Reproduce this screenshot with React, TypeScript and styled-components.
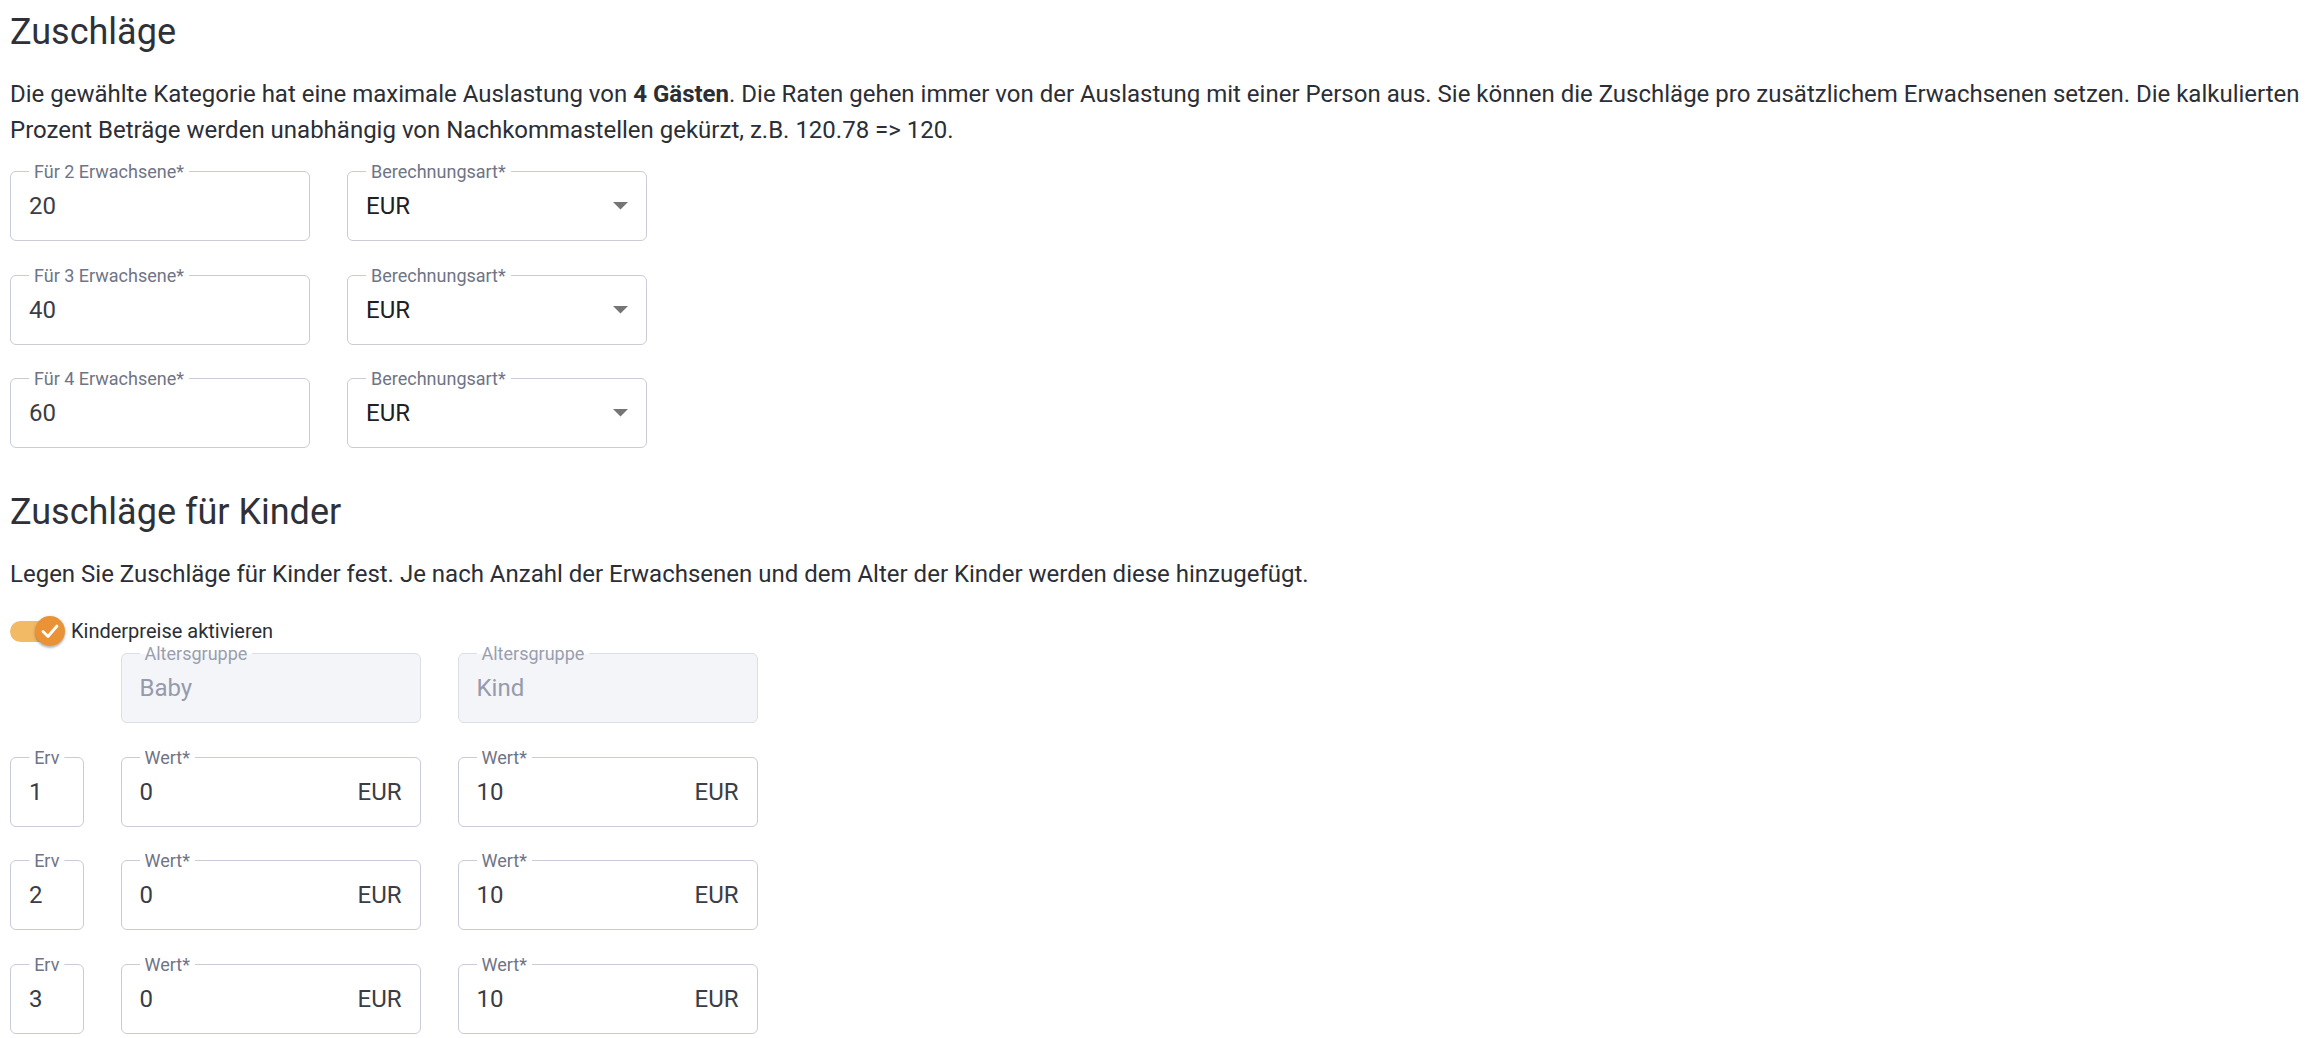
import React from 'react';
import styled, { createGlobalStyle } from 'styled-components';

const GlobalStyle = createGlobalStyle`
  body {
    margin: 0;
    background: #ffffff;
    font-family: Roboto, "Liberation Sans", Arial, sans-serif;
  }
`;

const Page = styled.div`
  padding: 8px 8px 0 10px;
`;

const Title = styled.h2<{ $spaced?: boolean }>`
  margin: ${p => (p.$spaced ? '40px' : '0')} 0 20px;
  font-size: 36px;
  font-weight: 400;
  line-height: 48px;
  color: #2e3138;
`;

const Text = styled.p`
  margin: 0;
  font-size: 24px;
  line-height: 36px;
  color: #2b2e35;

  b {
    font-weight: 700;
  }
`;

const FieldGrid = styled.div<{ $cols: string; $top: number }>`
  display: grid;
  grid-template-columns: ${p => p.$cols};
  column-gap: 37px;
  row-gap: 33.5px;
  margin-top: ${p => p.$top}px;
`;

const FieldBox = styled.div<{ $disabled?: boolean }>`
  position: relative;
  box-sizing: border-box;
  height: 70px;
  display: flex;
  align-items: center;
  padding: 0 18px 0 18px;
  border: 1px solid ${p => (p.$disabled ? '#dcdee6' : '#c9cbd7')};
  border-radius: 6px;
  background: ${p => (p.$disabled ? '#f4f5f9' : '#ffffff')};
`;

const FieldLabel = styled.span<{ $disabled?: boolean; $centered?: boolean }>`
  position: absolute;
  top: -10px;
  left: ${p => (p.$centered ? '50%' : '18px')};
  transform: ${p => (p.$centered ? 'translateX(-50%)' : 'none')};
  padding: 0 5px;
  font-size: 18px;
  line-height: 20px;
  white-space: nowrap;
  color: ${p => (p.$disabled ? '#9a9eaf' : '#6f7486')};
  background: ${p =>
    p.$disabled
      ? 'linear-gradient(to bottom, #ffffff 50%, #f4f5f9 50%)'
      : '#ffffff'};
`;

const FieldValue = styled.span<{ $disabled?: boolean; $strong?: boolean }>`
  flex: 1;
  font-size: 24px;
  line-height: 30px;
  color: ${p => (p.$disabled ? '#969aab' : p.$strong ? '#1f2024' : '#3a3d45')};
`;

const Adornment = styled.span`
  font-size: 24px;
  line-height: 30px;
  color: #3a3d45;
`;

const ArrowIcon = styled.svg`
  width: 15px;
  height: 8px;
  fill: #757575;
`;

const Spacer = styled.div``;

const SwitchRow = styled.label`
  display: flex;
  align-items: center;
  height: 40px;
  margin-top: 19px;
  gap: 5px;
`;

const SwitchWrap = styled.span`
  position: relative;
  width: 56px;
  height: 40px;
  flex-shrink: 0;
`;

const SwitchTrack = styled.span`
  position: absolute;
  left: 0;
  top: 9.5px;
  width: 51px;
  height: 21px;
  border-radius: 11px;
  background: #f3ba66;
`;

const SwitchThumb = styled.span`
  position: absolute;
  left: 25px;
  top: 5px;
  width: 30px;
  height: 30px;
  border-radius: 50%;
  background: #ea9336;
  box-shadow: 0 2px 2px rgba(0, 0, 0, 0.22), 0 1px 4px rgba(0, 0, 0, 0.12);
  display: flex;
  align-items: center;
  justify-content: center;
`;

const SwitchLabel = styled.span`
  font-size: 20px;
  line-height: 28px;
  color: #2b2e35;
`;

type FieldProps = {
  label: string;
  value: string;
  suffix?: string;
  select?: boolean;
  disabled?: boolean;
  centered?: boolean;
};

function Field({ label, value, suffix, select, disabled, centered }: FieldProps) {
  return (
    <FieldBox $disabled={disabled}>
      <FieldLabel $disabled={disabled} $centered={centered}>
        {label}
      </FieldLabel>
      <FieldValue $disabled={disabled} $strong={select}>
        {value}
      </FieldValue>
      {suffix && <Adornment>{suffix}</Adornment>}
      {select && (
        <ArrowIcon viewBox="0 0 15 8">
          <path d="M0 0 L7.5 7.5 L15 0 Z" />
        </ArrowIcon>
      )}
    </FieldBox>
  );
}

const adultRows = [
  { count: 2, value: '20' },
  { count: 3, value: '40' },
  { count: 4, value: '60' },
];

const childRows = [
  { adults: '1', baby: '0', kid: '10' },
  { adults: '2', baby: '0', kid: '10' },
  { adults: '3', baby: '0', kid: '10' },
];

export default function App() {
  return (
    <>
      <GlobalStyle />
      <Page>
        <Title>Zuschläge</Title>
        <Text>
          Die gewählte Kategorie hat eine maximale Auslastung von <b>4 Gästen</b>. Die Raten
          gehen immer von der Auslastung mit einer Person aus. Sie können die Zuschläge pro
          zusätzlichem Erwachsenen setzen. Die kalkulierten Prozent Beträge werden unabhängig
          von Nachkommastellen gekürzt, z.B. 120.78 =&gt; 120.
        </Text>

        <FieldGrid $cols="300px 300px" $top={23}>
          {adultRows.map(row => (
            <React.Fragment key={row.count}>
              <Field label={`Für ${row.count} Erwachsene*`} value={row.value} />
              <Field label="Berechnungsart*" value="EUR" select />
            </React.Fragment>
          ))}
        </FieldGrid>

        <Title $spaced>Zuschläge für Kinder</Title>
        <Text>
          Legen Sie Zuschläge für Kinder fest. Je nach Anzahl der Erwachsenen und dem Alter der
          Kinder werden diese hinzugefügt.
        </Text>

        <SwitchRow>
          <SwitchWrap>
            <SwitchTrack />
            <SwitchThumb>
              <svg width="30" height="30" viewBox="0 0 30 30">
                <path
                  d="M8 15.5 L13 20.5 L22 10"
                  fill="none"
                  stroke="#ffffff"
                  strokeWidth="2.8"
                  strokeLinecap="round"
                  strokeLinejoin="round"
                />
              </svg>
            </SwitchThumb>
          </SwitchWrap>
          <SwitchLabel>Kinderpreise aktivieren</SwitchLabel>
        </SwitchRow>

        <FieldGrid $cols="73.5px 300px 300px" $top={2}>
          <Spacer />
          <Field label="Altersgruppe" value="Baby" disabled />
          <Field label="Altersgruppe" value="Kind" disabled />
          {childRows.map(row => (
            <React.Fragment key={row.adults}>
              <Field label="Erv" value={row.adults} centered />
              <Field label="Wert*" value={row.baby} suffix="EUR" />
              <Field label="Wert*" value={row.kid} suffix="EUR" />
            </React.Fragment>
          ))}
        </FieldGrid>
      </Page>
    </>
  );
}
